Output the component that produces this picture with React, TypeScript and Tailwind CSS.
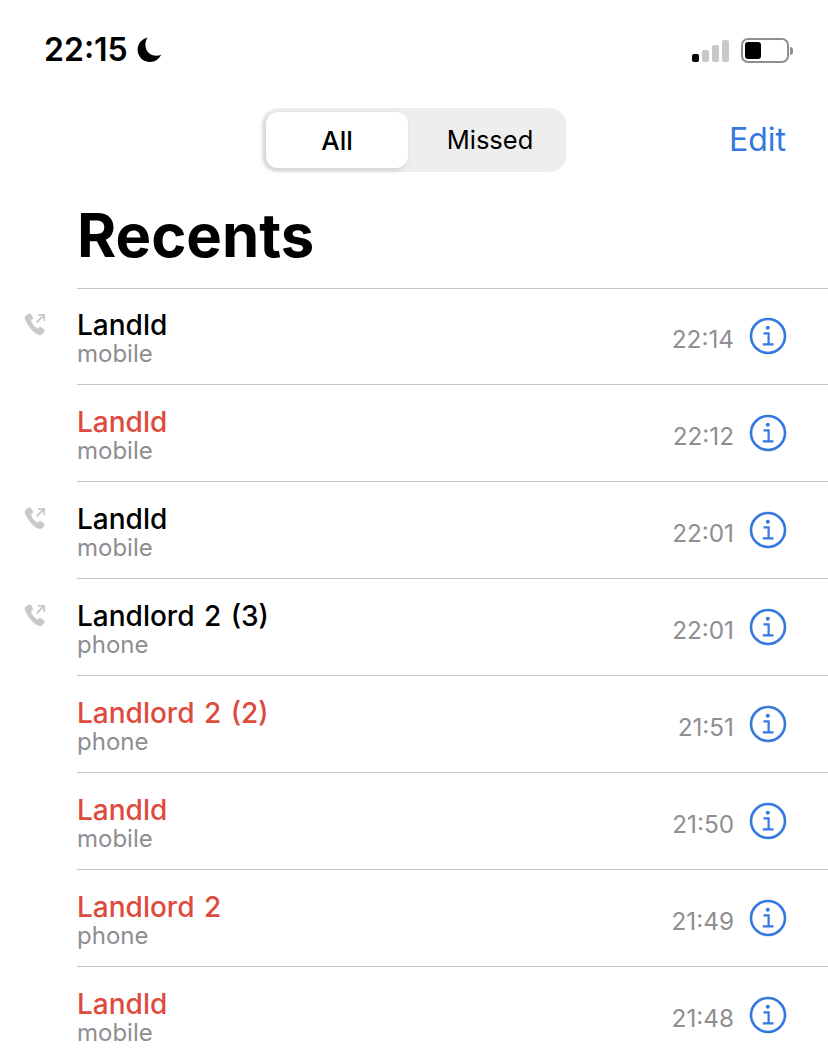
const calls = [
  { name: "Landld", sub: "mobile", time: "22:14", outgoing: true },
  { name: "Landld", sub: "mobile", time: "22:12", missed: true },
  { name: "Landld", sub: "mobile", time: "22:01", outgoing: true },
  { name: "Landlord 2 (3)", sub: "phone", time: "22:01", outgoing: true },
  { name: "Landlord 2 (2)", sub: "phone", time: "21:51", missed: true },
  { name: "Landld", sub: "mobile", time: "21:50", missed: true },
  { name: "Landlord 2", sub: "phone", time: "21:49", missed: true },
  { name: "Landld", sub: "mobile", time: "21:48", missed: true },
];

const OutgoingIcon = () => (
  <svg width="24" height="24" viewBox="0 0 24 24" className="text-[#c8c8c8]">
    <path
      fill="currentColor"
      stroke="currentColor"
      strokeWidth="0.8"
      d="M3.2 3.6 6 1.9c.7-.4 1.4-.2 1.8.5l1.8 3.2c.3.6.2 1.2-.3 1.6L8 8.300c-.3.3-.4.6-.2 1 .6 1.500 1.400 2.900 2.500 4.200 1.100 1.300 2.300 2.400 3.700 3.200.4.200.7.200 1-.1l1.300-1.100c.5-.4 1.100-.4 1.600 0l2.900 2.200c.6.500.7 1.200.2 1.800l-1.900 2.300c-.7.800-1.700 1.100-2.800.8-2.900-.8-5.600-2.800-7.900-5.500C6 14.300 3.900 10.900 2.400 7.500c-.6-1.500-.3-3 .8-3.900Z"
    />
    <path d="M13.500 10.500 21 3M15 2.800H21.200V9" fill="none" stroke="currentColor" strokeWidth="1.800" />
  </svg>
);

const InfoIcon = () => (
  <svg width="38" height="38" viewBox="0 0 38 38" className="text-[#3478e0]">
    <circle cx="19" cy="19" r="17" fill="none" stroke="currentColor" strokeWidth="2.600" />
    <circle cx="18.800" cy="10.800" r="2" fill="currentColor" />
    <path d="M14.500 16.300H19.600V27M13.800 27.300H24.500" fill="none" stroke="currentColor" strokeWidth="2.200" />
  </svg>
);

const Moon = () => (
  <svg width="28" height="28" viewBox="0 0 26 26">
    <path
      fill="#000"
      d="M10.600 1.500C6 2.800 1.500 6.600 1.500 12.800c0 6.300 5 11.400 11.500 11.400 5 0 8.500-2.900 10.300-6.700-1 .5-2.400.8-4.100.8-6.400 0-10.500-4.300-10.500-10.200 0-2.300.8-4.600 1.900-6.600Z"
    />
  </svg>
);

const StatusBar = () => (
  <div className="flex h-[108px] items-start justify-between pl-[44px] pr-[35px] pt-[32px]">
    <div className="flex items-center gap-[8px]">
      <span className="text-[32px] font-semibold leading-[36px] text-black">22:15</span>
      <Moon />
    </div>
    <div className="mt-[6px] flex items-center gap-[12px]">
      <div className="flex items-end gap-[3px]">
        <div className="h-[8px] w-[7px] rounded-[2px] bg-black" />
        <div className="h-[12px] w-[7px] rounded-[2px] bg-[#c8c8c8]" />
        <div className="h-[17px] w-[7px] rounded-[2px] bg-[#c8c8c8]" />
        <div className="h-[22px] w-[7px] rounded-[2px] bg-[#c8c8c8]" />
      </div>
      <div className="flex items-center gap-[1px]">
        <div className="h-[25px] w-[48px] rounded-[7px] border-[2px] border-[#8e8e8e] p-[2px]">
          <div className="h-full w-[16px] rounded-[3px] bg-black" />
        </div>
        <div className="h-[8px] w-[3px] rounded-r-[3px] bg-[#8e8e8e]" />
      </div>
    </div>
  </div>
);

const Segments = () => (
  <div className="flex h-[64px] items-center">
    <div className="ml-[262px] flex h-[64px] w-[304px] rounded-[16px] bg-[#eeeeef] p-[4px]">
      <div className="flex w-[142px] items-center justify-center rounded-[12px] bg-white text-[26px] font-medium shadow-[-2px_2px_6px_rgba(0,0,0,0.14)]">
        All
      </div>
      <div className="flex flex-1 items-center justify-center pl-[10px] text-[25.500px]">Missed</div>
    </div>
    <span className="ml-[163px] text-[32px] text-[#3478e0]">Edit</span>
  </div>
);

const Row = ({
  name,
  sub,
  time,
  outgoing,
  missed,
  first,
}: {
  name: string;
  sub: string;
  time: string;
  outgoing?: boolean;
  missed?: boolean;
  first: boolean;
}) => (
  <div className="flex">
    <div className={`flex w-[77px] shrink-0 justify-end pr-[30px] ${first ? "pt-[24px]" : "pt-[25px]"}`}>
      {outgoing && <OutgoingIcon />}
    </div>
    <div
      className={`flex flex-1 items-center border-t border-[#c6c6c8] pr-[41px] ${
        first ? "h-[96px] pt-[1px]" : "h-[97px] pt-[2px]"
      }`}
    >
      <div className="flex-1">
        <div
          className={`mt-[4px] text-[28px] font-[550] leading-[32px] [word-spacing:2px] ${
            missed ? "text-[#dd4b3e]" : "text-black"
          }`}
        >
          {name}
        </div>
        <div className="mb-[2px] text-[24px] leading-[26px] text-[#8e8e93]">{sub}</div>
      </div>
      <span className="mt-[4px] text-[24.300px] text-[#8e8e93]">{time}</span>
      <div className="ml-[15px] mt-[-3px]">
        <InfoIcon />
      </div>
    </div>
  </div>
);

export default function App() {
  return (
    <div className="h-[1061px] overflow-hidden bg-white font-['Inter',sans-serif] text-black">
      <StatusBar />
      <Segments />
      <h1 className="ml-[77px] mt-[18px] h-[98px] text-[59.800px] font-bold leading-[90px]">Recents</h1>
      {calls.map((c, i) => (
        <Row key={i} {...c} first={i === 0} />
      ))}
    </div>
  );
}
